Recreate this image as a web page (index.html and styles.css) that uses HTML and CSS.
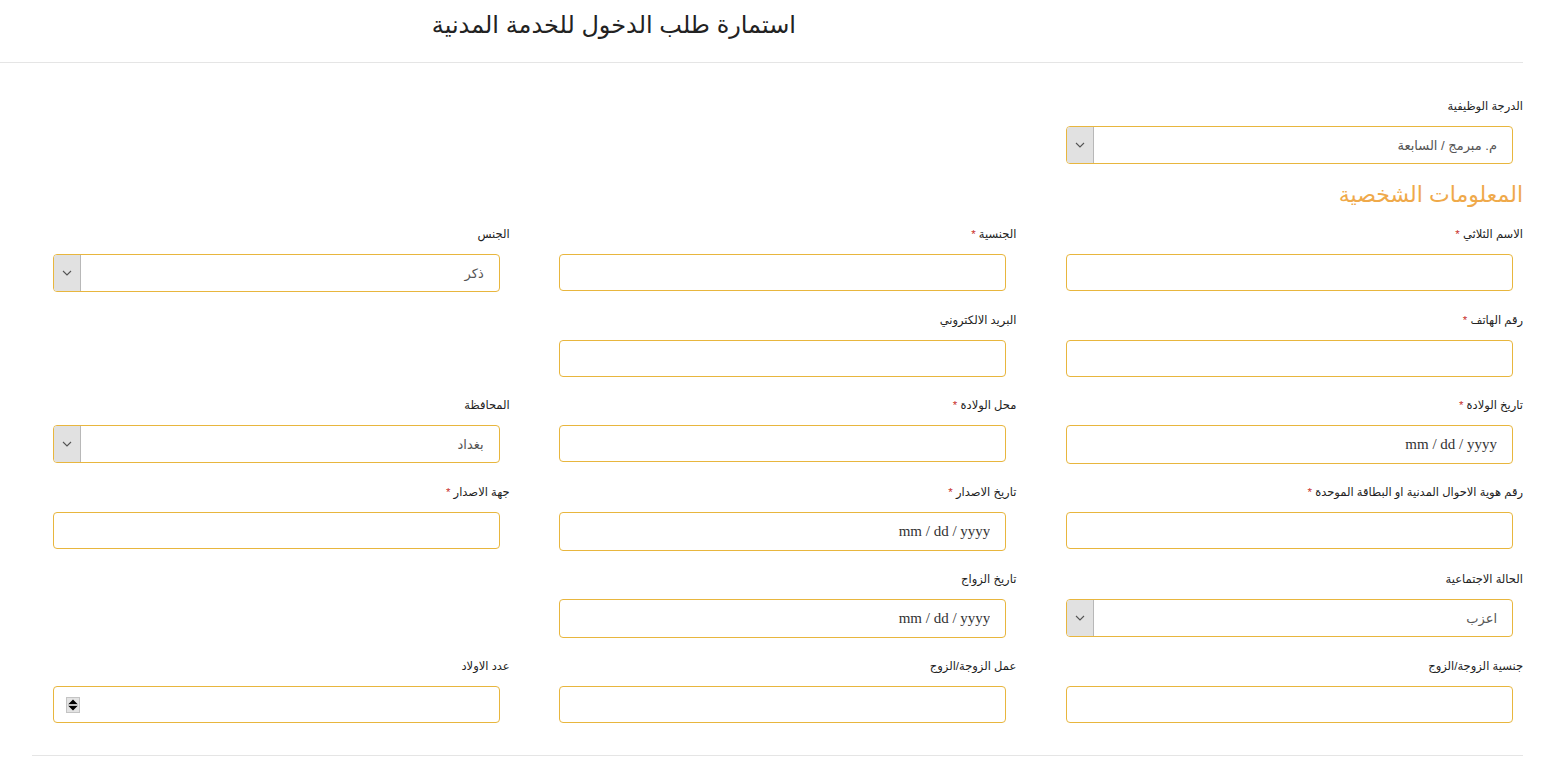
FILE: index.html
```html
<!DOCTYPE html>
<html lang="ar" dir="rtl">
<head>
    <meta charset="UTF-8">
    <meta name="viewport" content="width=device-width, initial-scale=1.0">
    <title>استمارة طلب الدخول للخدمة المدنية</title>
    <link rel="stylesheet" href="styles.css">
</head>
<body>

<div class="page">
    <div class="header">
        <h1>استمارة طلب الدخول للخدمة المدنية</h1>
    </div>

    <form class="form">
        <div class="grid">
            <div class="field top">
                <label>الدرجة الوظيفية</label>
                <div class="select">
                    <select><option>م. مبرمج / السابعة</option></select>
                    <span class="arrow"><svg width="10" height="6" viewBox="0 0 10 6"><path d="M1 1l4 4 4-4" fill="none" stroke="#555" stroke-width="1.1"/></svg></span>
                </div>
            </div>
        </div>

        <h3 class="section">المعلومات الشخصية</h3>

        <div class="grid">
            <div class="field">
                <label>الاسم الثلاثي <span class="req">*</span></label>
                <input type="text">
            </div>
            <div class="field">
                <label>الجنسية <span class="req">*</span></label>
                <input type="text">
            </div>
            <div class="field">
                <label>الجنس</label>
                <div class="select">
                    <select><option>ذكر</option><option>انثى</option></select>
                    <span class="arrow"><svg width="10" height="6" viewBox="0 0 10 6"><path d="M1 1l4 4 4-4" fill="none" stroke="#555" stroke-width="1.1"/></svg></span>
                </div>
            </div>

            <div class="field">
                <label>رقم الهاتف <span class="req">*</span></label>
                <input type="text">
            </div>
            <div class="field">
                <label>البريد الالكتروني</label>
                <input type="email">
            </div>
            <div class="field"></div>

            <div class="field">
                <label>تاريخ الولادة <span class="req">*</span></label>
                <input type="text" class="date" placeholder="mm / dd / yyyy">
            </div>
            <div class="field">
                <label>محل الولادة <span class="req">*</span></label>
                <input type="text">
            </div>
            <div class="field">
                <label>المحافظة</label>
                <div class="select">
                    <select><option>بغداد</option><option>البصرة</option><option>نينوى</option></select>
                    <span class="arrow"><svg width="10" height="6" viewBox="0 0 10 6"><path d="M1 1l4 4 4-4" fill="none" stroke="#555" stroke-width="1.1"/></svg></span>
                </div>
            </div>

            <div class="field">
                <label>رقم هوية الاحوال المدنية او البطاقة الموحدة <span class="req">*</span></label>
                <input type="text">
            </div>
            <div class="field">
                <label>تاريخ الاصدار <span class="req">*</span></label>
                <input type="text" class="date" placeholder="mm / dd / yyyy">
            </div>
            <div class="field">
                <label>جهة الاصدار <span class="req">*</span></label>
                <input type="text">
            </div>

            <div class="field">
                <label>الحالة الاجتماعية</label>
                <div class="select">
                    <select><option>اعزب</option><option>متزوج</option></select>
                    <span class="arrow"><svg width="10" height="6" viewBox="0 0 10 6"><path d="M1 1l4 4 4-4" fill="none" stroke="#555" stroke-width="1.1"/></svg></span>
                </div>
            </div>
            <div class="field">
                <label>تاريخ الزواج</label>
                <input type="text" class="date" placeholder="mm / dd / yyyy">
            </div>
            <div class="field"></div>

            <div class="field">
                <label>جنسية الزوجة/الزوج</label>
                <input type="text">
            </div>
            <div class="field">
                <label>عمل الزوجة/الزوج</label>
                <input type="text">
            </div>
            <div class="field">
                <label>عدد الاولاد</label>
                <div class="number">
                    <input type="text">
                    <span class="spin">
                        <svg width="12" height="14" viewBox="0 0 12 14"><path d="M6 1.5L10.5 6H1.5z M6 12.5L10.5 8H1.5z" fill="#000"/><line x1="1" y1="7" x2="11" y2="7" stroke="#999" stroke-width="1"/></svg>
                    </span>
                </div>
            </div>
        </div>
    </form>

    <div class="footer-line"></div>
</div>

</body>
</html>
```

FILE: styles.css
```css
body {
    margin: 0;
    padding: 0;
    background-color: #fff;
    color: #222;
    font-family: Arial, "Liberation Sans", "DejaVu Sans", sans-serif;
}
.page {
    padding-right: 29px;
}
.header {
    height: 62px;
    border-bottom: 1px solid #e5e5e5;
}
.header h1 {
    margin: 0 727px 0 0;
    padding-top: 7px;
    font-size: 24px;
    font-weight: normal;
    line-height: 36px;
    color: #222;
}
.form {
    padding-top: 34px;
}
.grid {
    display: grid;
    grid-template-columns: repeat(3, 1fr);
    margin-left: 3px;
}
.field {
    margin-bottom: 19px;
}
.field.top {
    margin-bottom: 0;
}
.field label {
    display: block;
    font-size: 11.5px;
    line-height: 18px;
    margin-bottom: 11px;
    color: #222;
}
.req {
    color: #c9302c;
}
.field input,
.field .select,
.field .number {
    box-sizing: border-box;
    width: 447px;
    height: 37px;
    margin-right: 10px;
    border: 1px solid #e8b63e;
    border-radius: 4px;
    background: #fff;
}
.field input {
    display: block;
    padding: 0 15px;
    font-family: inherit;
    font-size: 13px;
    outline: none;
}
.field input.date {
    height: 39px;
    direction: ltr;
    text-align: right;
    font-family: "Liberation Serif", "Times New Roman", serif;
    font-size: 15px;
}
.field input.date::placeholder {
    font-family: "Liberation Serif", "Times New Roman", serif;
    color: #333;
}
.select {
    display: flex;
    overflow: hidden;
    height: 38px !important;
}
.select select {
    flex: 1;
    appearance: none;
    -webkit-appearance: none;
    border: none;
    background: transparent;
    padding: 0 15px;
    font-family: inherit;
    font-size: 13px;
    color: #555;
    outline: none;
}
.select .arrow {
    width: 26px;
    background-color: #e1e1e1;
    border-right: 1px solid #b8b8b8;
    display: flex;
    align-items: center;
    justify-content: center;
}
.number {
    display: flex;
    align-items: center;
}
.field .number input {
    flex: 1;
    width: auto;
    height: 100%;
    margin: 0;
    border: none;
    background: transparent;
}
.number .spin {
    display: flex;
    width: 14px;
    height: 16px;
    margin-left: 12px;
    background-color: #e3e3e3;
    border: 1px solid #c4c4c4;
    box-sizing: border-box;
    align-items: center;
    justify-content: center;
}
.section {
    margin: 14px 0 13px 0;
    font-size: 22px;
    font-weight: normal;
    line-height: 34px;
    color: #efa94a;
}
.footer-line {
    margin: 13px 0 0 32px;
    border-top: 1px solid #e5e5e5;
}
```
